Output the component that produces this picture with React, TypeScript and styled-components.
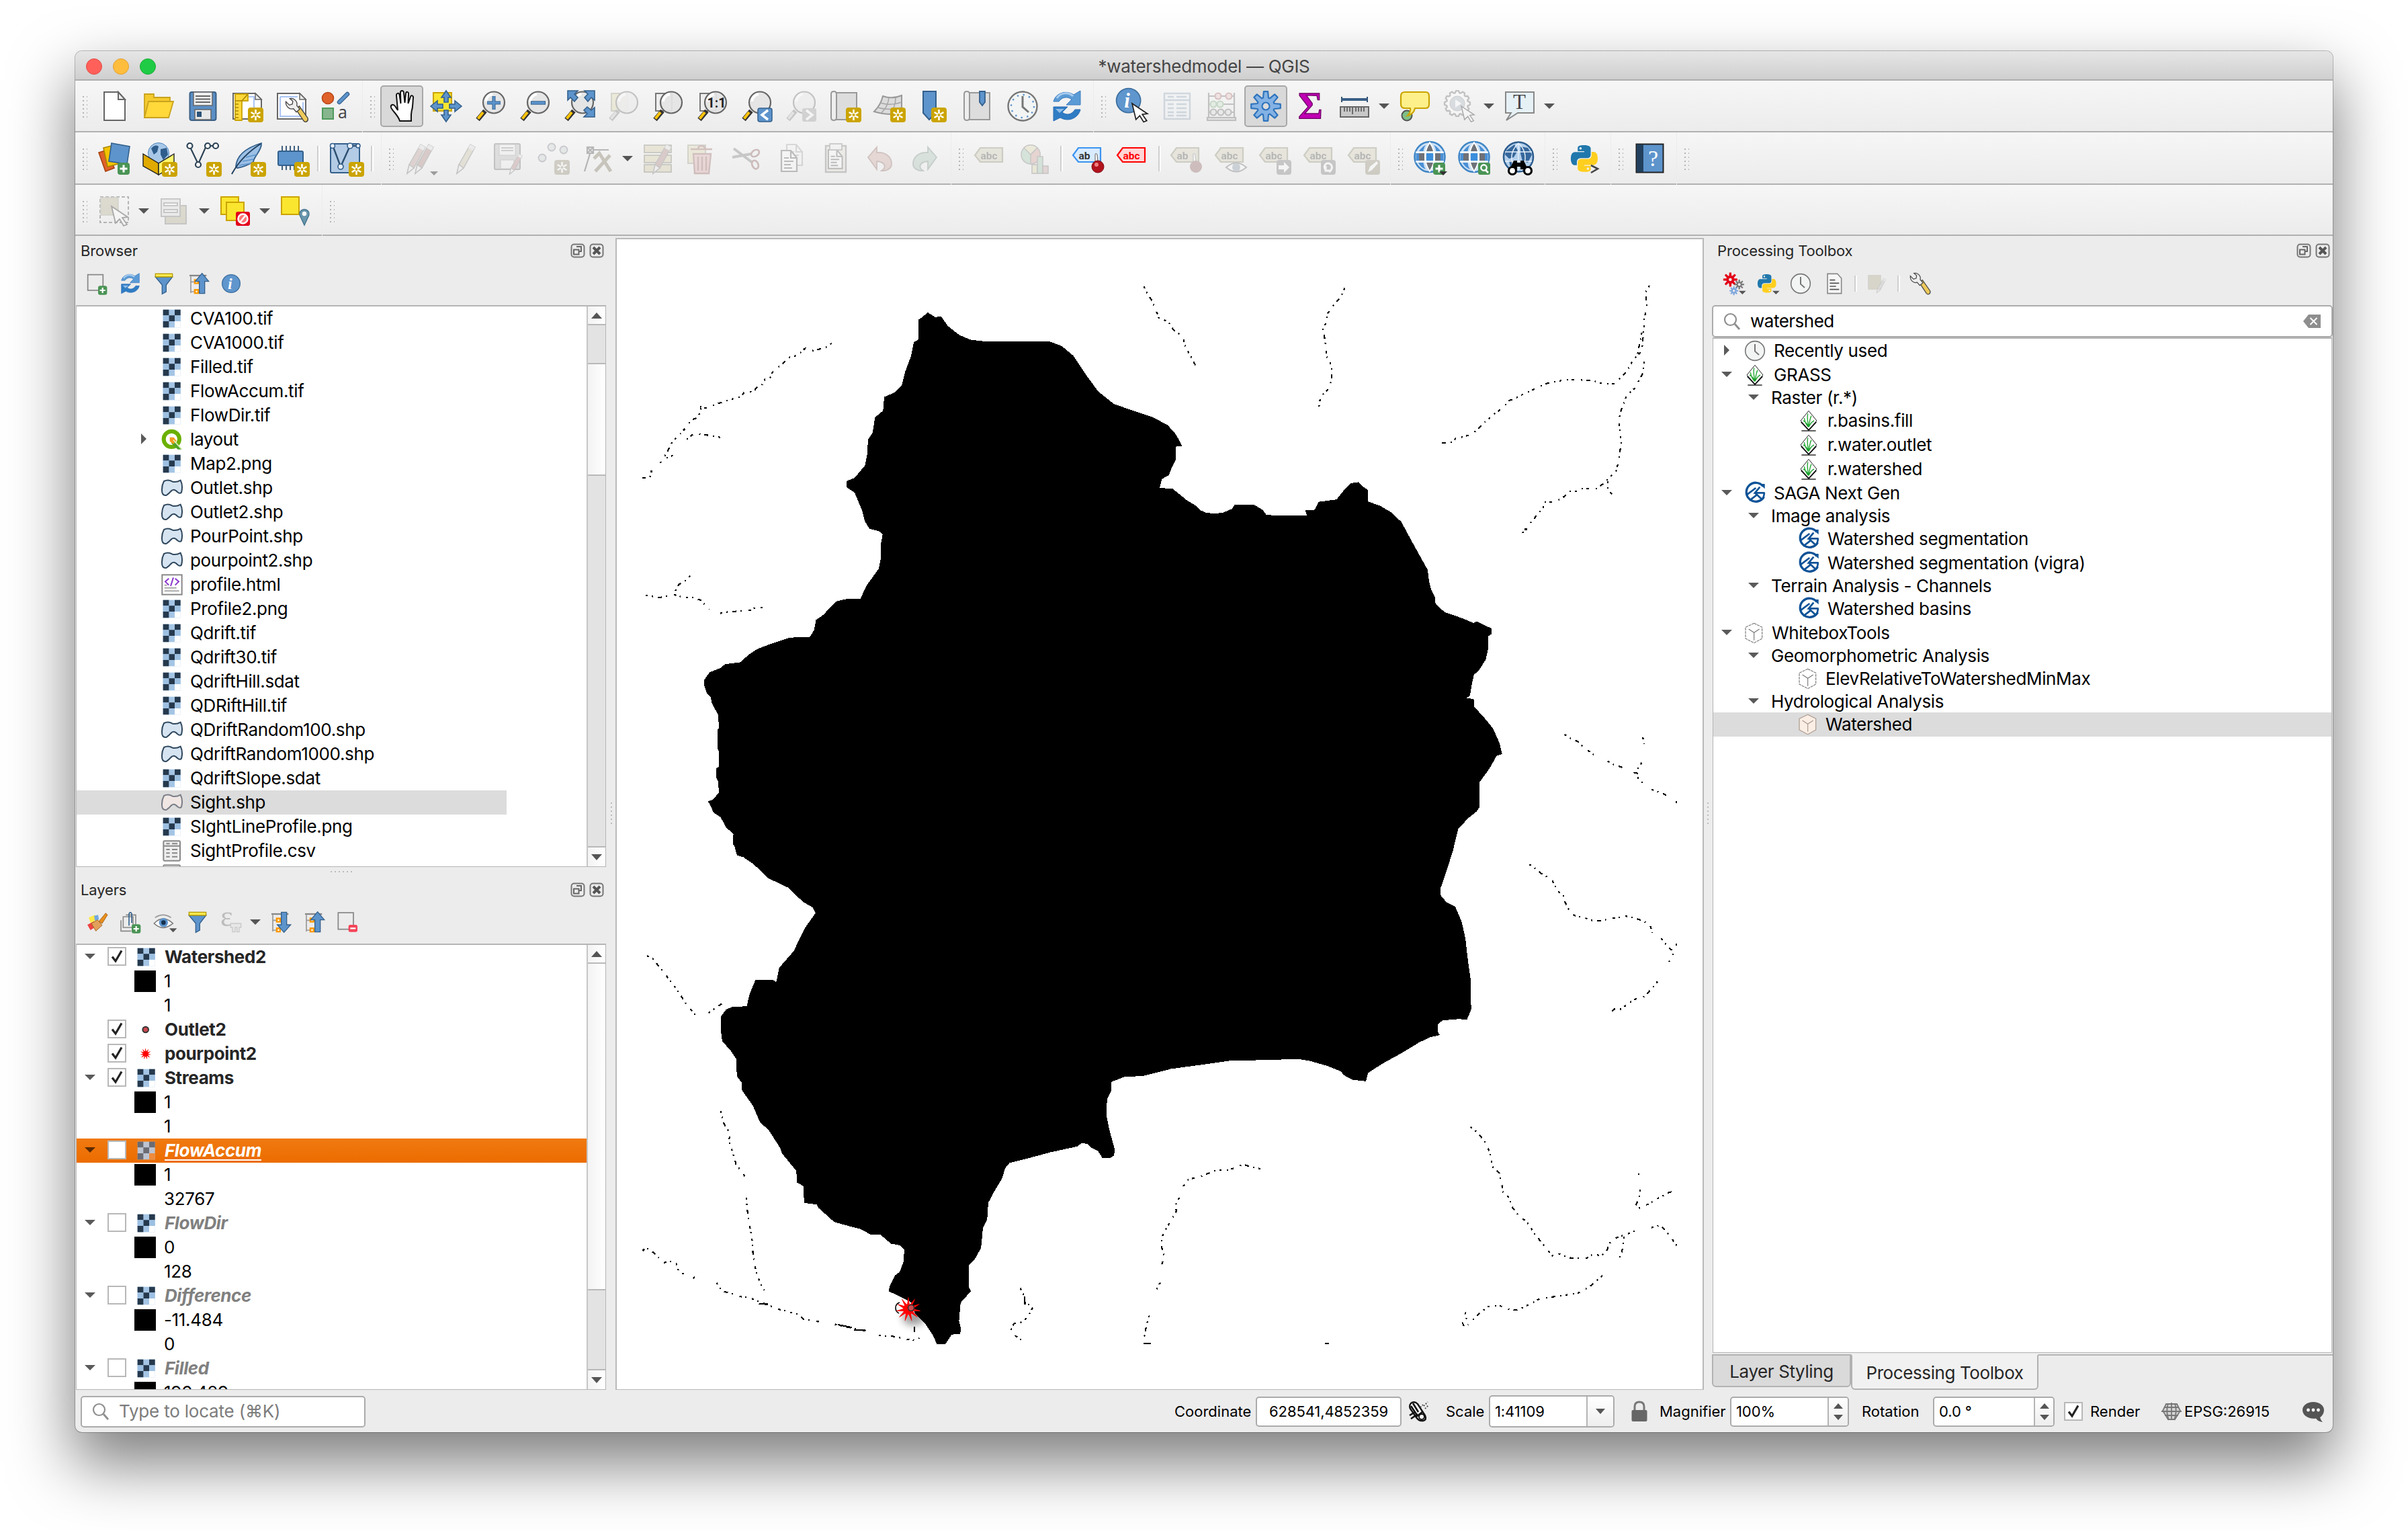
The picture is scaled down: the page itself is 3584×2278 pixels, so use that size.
import React from "react";
import styled, { createGlobalStyle, css } from "styled-components";

const GlobalStyle = createGlobalStyle`
  * { box-sizing: border-box; }
  body {
    margin: 0;
    background: #fff;
    font-family: Inter, "Liberation Sans", sans-serif;
    color: #000;
  }
`;

/* ------------------------------------------------------------------ */
/* Icons                                                               */
/* ------------------------------------------------------------------ */

const Glyph = styled.svg<{ $size: number; $faded?: boolean }>`
  display: block;
  flex: none;
  width: ${(p) => p.$size}px;
  height: ${(p) => p.$size}px;
  overflow: visible;
  opacity: ${(p) => (p.$faded ? 0.34 : 1)};
`;

const sansText = { fontFamily: "'Open Sans', 'Liberation Sans', sans-serif" };
const condText = { fontFamily: "Roboto, 'Liberation Sans', sans-serif", fontWeight: 700 };
const serifText = { fontFamily: "'Liberation Serif', serif" };

const Star = ({ x = 25, y = 26, fill = "#cba400" }) => (
  <g transform={`translate(${x} ${y})`}>
    <rect width="23" height="22" rx="4" fill={fill} stroke="none" />
    <path d="M11.5 3v16M4.6 7l13.8 8M4.6 15l13.8-8" stroke="#fff" strokeWidth="2.6" />
    <circle cx="11.5" cy="11" r="2" fill={fill} stroke="none" />
  </g>
);
const Plus = ({ x = 30, y = 30, s = 18 }) => (
  <g transform={`translate(${x} ${y}) scale(${s / 18})`}>
    <rect width="18" height="18" rx="4" fill="#4a9455" stroke="none" />
    <path d="M9 3.5v11M3.500 9h11" stroke="#fff" strokeWidth="3" />
  </g>
);
const Lens = ({ faded = false }) => (
  <g>
    <path d="M16 31L5 44" stroke={faded ? "#777" : "#333"} strokeWidth="7" />
    <path d="M13 33L5.500 42.500" stroke={faded ? "#ccc" : "#ffc40a"} strokeWidth="4" />
    <circle cx="29" cy="18.500" r="16" fill="#e4e4e4" fillOpacity=".93" stroke="#666" strokeWidth="2.200" />
    <path d="M17 17a12 12 0 0 1 10-11" fill="none" stroke="#fff" strokeWidth="4" />
  </g>
);
const Pencil = ({ c = "#a88", x = 0 }) => (
  <g transform={`translate(${x} 0)`}>
    <path d="M12 46L15 33L32 3L39 7L22 38Z" fill={c} stroke="#777" strokeWidth="1.500" />
    <path d="M12 46L15 33L22 38Z" fill="#eee" stroke="#777" strokeWidth="1.500" />
    <path d="M29 8L36 12L39 7L32 3Z" fill="#ddd" />
  </g>
);
const Cursor = ({ x = 0, y = 0, s = 1 }) => (
  <path
    transform={`translate(${x} ${y}) scale(${s})`}
    d="M0 0L24 16L16 17L23 27L18 29L12 19L6 25Z"
    fill="#fff"
    stroke="#222"
    strokeWidth="1.800"
  />
);
const Wrench = ({ handle = "#edc95a" }) => (
  <g>
    <path d="M22 22L29 16L46 40C48 46 42 50 38 46Z" fill={handle} stroke="#444" strokeWidth="1.800" />
    <path
      d="M10 1C19 -1 26 7 24 15L30 22L23 28L17 21C10 24 1 17 2 7L9 14L15 12L16 6Z"
      fill="#eee"
      stroke="#444"
      strokeWidth="1.800"
    />
  </g>
);
const Python = () => (
  <g>
    <path
      fill="#2178ac"
      d="M14.25.18l.9.2.73.26.59.3.45.32.34.34.25.34.16.33.1.3.04.26.02.2-.01.13V8.5l-.05.63-.13.55-.21.46-.26.38-.3.31-.33.25-.35.19-.35.14-.33.1-.3.07-.26.04-.21.02H8.77l-.69.05-.59.14-.5.22-.41.27-.33.32-.27.35-.2.36-.15.37-.1.35-.07.32-.04.27-.02.21v3.06H3.17l-.21-.03-.28-.07-.32-.12-.35-.18-.36-.26-.36-.36-.35-.46-.32-.59-.28-.73-.21-.88-.14-1.05-.05-1.23.06-1.22.16-1.04.24-.87.32-.71.36-.57.4-.44.42-.33.42-.24.4-.16.36-.1.32-.05.24-.01h.16l.06.01h8.16v-.83H6.18l-.01-2.75-.02-.37.05-.34.11-.31.17-.28.25-.26.31-.23.38-.2.44-.18.51-.15.58-.12.64-.1.71-.06.77-.04.84-.02 1.27.05zm-6.3 1.98l-.23.33-.08.41.08.41.23.34.33.22.41.09.41-.09.33-.22.23-.34.08-.41-.08-.41-.23-.33-.33-.22-.41-.09-.41.09z"
    />
    <path
      fill="#ffcf1f"
      d="M21.04 6.11l.28.06.32.12.35.18.36.27.36.35.35.47.32.59.28.73.21.88.14 1.04.05 1.23-.06 1.23-.16 1.04-.24.86-.32.71-.36.57-.4.45-.42.33-.42.24-.4.16-.36.09-.32.05-.24.02-.16-.01h-8.22v.82h5.84l.01 2.76.02.36-.05.34-.11.31-.17.29-.25.25-.31.24-.38.2-.44.17-.51.15-.58.13-.64.09-.71.07-.77.04-.84.01-1.27-.04-1.07-.14-.9-.2-.73-.25-.59-.3-.45-.33-.34-.34-.25-.34-.16-.33-.1-.3-.04-.25-.02-.2.01-.13v-5.34l.05-.64.13-.54.21-.46.26-.38.3-.32.33-.24.35-.2.35-.14.33-.1.3-.06.26-.04.21-.02.13-.01h5.84l.69-.05.59-.14.5-.21.41-.28.33-.32.27-.35.2-.36.15-.36.1-.35.07-.32.04-.28.02-.21V6.07h2.09l.14.01zm-6.47 14.25l-.23.33-.08.41.08.41.23.33.33.23.41.08.41-.08.33-.23.23-.33.08-.41-.08-.41-.23-.33-.33-.23-.41-.08-.41.08z"
    />
  </g>
);
const Refresh = () => (
  <g>
    <path d="M4 17C7 5 22 -1 34 7L44 1V22H23L31 14C25 9 17 10 12 17Z" fill="#5b9bd5" stroke="#3a7abf" strokeWidth="1" />
    <path d="M9 12C14 4 26 2 33 9" fill="none" stroke="#a9cdf0" strokeWidth="3" />
    <path d="M44 29C41 42 26 48 14 41L4 46V25H25L17 33C23 38 31 37 36 29Z" fill="#2f7cc4" stroke="#2a6db5" strokeWidth="1" />
    <path d="M7 28H20L13 34Z" fill="#8fbde8" />
  </g>
);
const Tag = ({ text, stroke = "#88866c", fill = "#cfcbb0", color = "#444" }: { text: string; stroke?: string; fill?: string; color?: string }) => (
  <g>
    <path d="M1 19L9 8H42V29H9Z" fill={fill} stroke={stroke} strokeWidth="2.200" />
    <text x="9.500" y="24.500" fontSize="15.500" fill={color} {...condText}>
      {text}
    </text>
  </g>
);
const Globe = () => (
  <g>
    <circle cx="24" cy="21.500" r="22.500" fill="#cfe2f5" stroke="#3f86c6" strokeWidth="2.600" />
    <path d="M10 10Q13 6 18 3.500Q15 8 14.500 13H8ZM30 3.500Q35 6 38 10L40 13H33.500Q33 8 30 3.500Z" fill="#4a90d6" />
    <path d="M18.500 13Q20 5 24 1.500Q28 5 29.500 13Z" fill="#6f7178" />
    <path d="M3.500 16H8V27H3.500ZM40 16H44.500V27H40Z" fill="#4a90d6" />
    <path d="M8 16H16V27H8ZM32 16H40V27H32Z" fill="#6f7178" />
    <path d="M19 16H29V27H19Z" fill="#3c8fdd" />
    <path d="M7 30H14.500Q15 36 18 40Q10 37 7 30ZM41 30H33.500Q33 36 30 40Q38 37 41 30Z" fill="#4a90d6" />
    <path d="M18.500 30H29.500Q28 38 24 42Q20 38 18.500 30Z" fill="#6f7178" />
    <path d="M3 14.500H45M3 28.500H45" stroke="#fff" strokeWidth="1.800" />
    <path d="M24 0Q10 21 24 43Q38 21 24 0Z" fill="none" stroke="#fff" strokeWidth="1.800" />
  </g>
);
const gearPath = (teeth: number, ro: number, ri: number, cx: number, cy: number, tip = 0.36) => {
  const pts: string[] = [];
  for (let i = 0; i < teeth; i++) {
    const a = (i / teeth) * Math.PI * 2 - Math.PI / 2;
    const w = Math.PI / teeth;
    [
      [-0.8, ri],
      [-tip, ro],
      [tip, ro],
      [0.8, ri],
    ].forEach(([k, r]) => pts.push(`${(cx + Math.cos(a + k * w) * r).toFixed(1)} ${(cy + Math.sin(a + k * w) * r).toFixed(1)}`));
  }
  return `M${pts.join("L")}Z`;
};
const TreeArrow = ({ up }: { up: boolean }) => (
  <g>
    <path d="M6 6H44" stroke="#888" strokeWidth="3.500" />
    <path d="M9 8V45M9 20H20M9 42H20" stroke="#999" strokeWidth="2.500" />
    <rect x="16" y="14" width="11" height="11" fill="#f90" />
    <rect x="16" y="36" width="11" height="11" fill="#f90" />
    <rect x="20" y="18" width="3.500" height="3.500" fill="#fff" />
    <rect x="20" y="40" width="3.500" height="3.500" fill="#fff" />
    <path
      d={up ? "M34 1L49 19H40V46H28V19H19Z" : "M34 47L49 30H40V2H28V30H19Z"}
      fill="#5d94cc"
      stroke="#33608c"
      strokeWidth="2"
    />
  </g>
);
const Info = () => (
  <g>
    <circle cx="24" cy="24" r="20" fill="#5f96cd" stroke="#3d6f9f" strokeWidth="2" />
    <text x="17" y="36" fontSize="34" fontStyle="italic" fontWeight="700" fill="#fff" {...serifText}>
      i
    </text>
  </g>
);
const Funnel = () => (
  <g>
    <path d="M5 9L20 27V47L29 42V27L43 9Z" fill="#5d94cc" stroke="#33608c" strokeWidth="2" />
    <rect x="5" y="2" width="38" height="7" fill="#fce94f" stroke="#b89b00" strokeWidth="2" />
  </g>
);
const Clock = () => (
  <g>
    <circle cx="24" cy="24" r="21.500" fill="#f3f5f5" stroke="#777" strokeWidth="2.400" />
    <path d="M24 9V25L33 33" fill="none" stroke="#777" strokeWidth="3" />
  </g>
);
const Page = ({ x = 0, y = 0 }) => (
  <g transform={`translate(${x} ${y})`}>
    <path d="M1 1H15L24 12V32H1Z" fill="#f8f8f8" stroke="#555" strokeWidth="2.200" />
    <path d="M15 1V12H24M5 12H12M5 17H19M5 22H15M5 27H17" fill="none" stroke="#555" strokeWidth="2.200" />
  </g>
);
const Roll = () => (
  <g>
    <path d="M8 4H41V44H8Z" fill="#ddd" stroke="#999" strokeWidth="2" />
    <path d="M3 6Q3 2 7 2Q11 2 11 6V41Q11 45 7 45Q3 45 3 41Z" fill="#eee" stroke="#999" strokeWidth="2" />
  </g>
);

const icons: Record<string, React.ReactNode> = {
  newFile: (
    <g fill="#fff" stroke="#666" strokeWidth="2">
      <path d="M9 3H30L40 14V45H9Z" />
      <path d="M30 3V14H40Z" fill="#eee" />
    </g>
  ),
  open: (
    <g fill="#ffd83a" stroke="#c9a21d" strokeWidth="1.800">
      <path d="M3 40V6H17V11H41V20L38 41Z" fill="#f5ca2e" />
      <path d="M9 17H46L39 41H3Z" />
    </g>
  ),
  save: (
    <g>
      <rect x="4.500" y="3" width="39" height="42" rx="3" fill="#5b8fc6" stroke="#3a5f87" strokeWidth="2" />
      <rect x="10" y="3" width="28" height="20" fill="#eee" stroke="#666" strokeWidth="1.500" />
      <path d="M13 9H35M13 13.500H35M13 18H35" stroke="#666" strokeWidth="2" />
      <rect x="12" y="29" width="24" height="15" fill="#e8e8e8" stroke="#666" strokeWidth="1.500" />
      <rect x="15" y="32" width="7" height="8" fill="#2c5378" />
    </g>
  ),
  layout: (
    <g>
      <path d="M3 5H36L45 14V43H3Z" fill="#fff" stroke="#666" strokeWidth="2" />
      <path d="M36 5V14H45Z" fill="#eee" stroke="#666" strokeWidth="1.500" />
      <path d="M15 10H34V39" fill="none" stroke="#a9c4f5" strokeWidth="2" />
      <path d="M6 6H25V16H16V45H6Z" fill="#ffd83a" stroke="#cba400" strokeWidth="1.800" />
      <path d="M25 6L16 16L6 16M6 21H11M6 26H11M6 31H11M6 36H11M6 41H11" fill="none" stroke="#a88600" strokeWidth="1.600" />
      <Star />
    </g>
  ),
  layoutManager: (
    <g>
      <path d="M3 5H36L45 14V43H3Z" fill="#fff" stroke="#666" strokeWidth="2" />
      <path d="M36 5V14H45Z" fill="#eee" stroke="#666" strokeWidth="1.500" />
      <path d="M7 10H33M7 10V39H41V18" fill="none" stroke="#a9c4f5" strokeWidth="2" />
      <g transform="translate(14 12) scale(.74)">
        <Wrench />
      </g>
    </g>
  ),
  styles: (
    <g>
      <circle cx="12" cy="12" r="8.500" fill="#e0622b" stroke="#b9481a" strokeWidth="1.600" />
      <path d="M29 18L41 6" stroke="#33608c" strokeWidth="6.500" strokeLinecap="round" />
      <path d="M29 18L41 6" stroke="#5d94cc" strokeWidth="4" strokeLinecap="round" />
      <rect x="4" y="27" width="16" height="16" fill="#87b58d" stroke="#4f9a5b" strokeWidth="2" />
      <text x="27" y="42" fontSize="25" fill="#444" {...sansText}>
        a
      </text>
    </g>
  ),
  pan: (
    <path
      d="M21 46C19 38 10 31 8 26C7 22 11 20 14 24L18 30L16 8C16 4 20 4 20.500 7L22.500 20L22 4C22 0 26.500 0 27 4L28.500 19L30 5C30.500 2 34.500 2 34 6L33.500 20L37 10C38 7 41.500 8 41 12C40 20 41 24 38.500 32C37.500 38 38 42 38 46Z"
      fill="#fff"
      stroke="#111"
      strokeWidth="2"
    />
  ),
  panSelection: (
    <g>
      <rect x="5" y="4" width="27" height="27" fill="#fbe62f" stroke="#cba400" strokeWidth="2" />
      <g fill="#5d94cc" stroke="#33608c" strokeWidth="1.600">
        <path d="M24 1L31 11H27V18H21V11H17Z" />
        <path d="M24 47L31 37H27V30H21V37H17Z" />
        <path d="M1 24L11 16V21H19V27H11V32Z" />
        <path d="M47 24L37 16V21H29V27H37V32Z" />
      </g>
    </g>
  ),
  zoomIn: (
    <g>
      <Lens />
      <path d="M29 9V29M19 19H39" stroke="#33608c" strokeWidth="5" />
      <path d="M29 9.500V28.500M19.500 19H38.500" stroke="#5d94cc" strokeWidth="3" />
    </g>
  ),
  zoomOut: (
    <g>
      <Lens />
      <path d="M18 19H40" stroke="#33608c" strokeWidth="5.500" />
      <path d="M19 19H39" stroke="#5d94cc" strokeWidth="3.500" />
    </g>
  ),
  zoomFull: (
    <g>
      <Lens />
      <g fill="#5d94cc" stroke="#33608c" strokeWidth="1.600">
        <path d="M7 1H22L17 6L22 11L17 17L11 11L7 15Z" />
        <path d="M47 1H32L37 6L32 11L37 17L42 11L47 15Z" />
        <path d="M47 40H31L36 35L31 30L36 25L42 30L47 26Z" />
      </g>
    </g>
  ),
  zoomSelection: (
    <g>
      <rect x="6" y="5" width="24" height="26" fill="#ddd6a8" stroke="#998" strokeWidth="2" />
      <Lens faded />
    </g>
  ),
  zoomLayer: (
    <g>
      <rect x="6" y="5" width="24" height="26" fill="#eee" stroke="#777" strokeWidth="2" />
      <Lens />
    </g>
  ),
  zoomNative: (
    <g>
      <rect x="6" y="5" width="24" height="26" fill="#eee" stroke="#777" strokeWidth="2" />
      <Lens />
      <text x="16.500" y="25.500" fontSize="19.500" fill="#222" {...condText}>
        1:1
      </text>
    </g>
  ),
  zoomLast: (
    <g>
      <Lens />
      <rect x="26" y="27" width="21" height="20" rx="3" fill="#5d94cc" stroke="#33608c" strokeWidth="1.500" />
      <path d="M41 30L32 37L41 44" fill="none" stroke="#fff" strokeWidth="3.500" />
    </g>
  ),
  zoomNext: (
    <g>
      <Lens faded />
      <rect x="26" y="27" width="21" height="20" rx="3" fill="#999" />
      <path d="M32 30L41 37L32 44" fill="none" stroke="#fff" strokeWidth="3.500" />
    </g>
  ),
  newMap: (
    <g>
      <Roll />
      <Star />
    </g>
  ),
  new3d: (
    <g>
      <path d="M14 9Q28 14 42 8V35Q20 38 1 32Q11 22 14 9Z" fill="#dcdcdc" stroke="#999" strokeWidth="2" />
      <path d="M10 19Q26 24 42 18M6 26Q24 31 42 26M23 11Q22 24 12 34M33 11Q33 24 25 36" fill="none" stroke="#a5a5a5" strokeWidth="1.500" />
      <Star />
    </g>
  ),
  newBookmark: (
    <g>
      <path d="M8 2H27V34L17 44L8 34Z" fill="#5d94cc" stroke="#33608c" strokeWidth="2" />
      <Star x={20} />
    </g>
  ),
  bookmarks: (
    <g>
      <Roll />
      <path d="M26 2H34V18L30 23L26 18Z" fill="#5d94cc" stroke="#33608c" strokeWidth="1.800" />
    </g>
  ),
  temporal: (
    <g>
      <Clock />
      <circle cx="24" cy="24" r="17" fill="none" stroke="#5d94cc" strokeWidth="2.400" strokeDasharray="2.400 6.500" />
    </g>
  ),
  refresh: <Refresh />,
  identify: (
    <g transform="translate(-6 -6)">
      <g transform="translate(2 0) scale(.9)">
        <Info />
      </g>
      <Cursor x={29} y={26} s={0.95} />
    </g>
  ),
  table: (
    <g fill="none" stroke="#8fa3b5" strokeWidth="2.400">
      <rect x="5" y="5" width="38" height="38" fill="#eef2f6" />
      <path d="M5 15H43M10 10H19M23 10H38M10 21H19M23 21H38M10 27H19M23 27H38M10 33H19M23 33H38M10 38H19M23 38H38" />
    </g>
  ),
  abacus: (
    <g fill="#ddd" stroke="#666" strokeWidth="2.200">
      <path d="M5 4V42M43 4V42M5 9H43M5 21H43M5 33H43" />
      <rect x="3" y="41" width="42" height="4" />
      <g fill="#e8c4c4" stroke="#a66">
        <circle cx="19" cy="9" r="4.500" />
        <circle cx="35" cy="9" r="4.500" />
      </g>
      <g fill="#cfe3cf" stroke="#7a7">
        <circle cx="12" cy="21" r="4.500" />
        <circle cx="22" cy="21" r="4.500" />
      </g>
      <circle cx="12" cy="33" r="4.500" />
      <circle cx="23" cy="33" r="4.500" />
      <circle cx="34" cy="33" r="4.500" />
    </g>
  ),
  gear: (
    <g stroke="#2f74bd" strokeWidth="2.200" strokeLinejoin="round">
      <path d={gearPath(8, 22, 13, 24, 24)} fill="#84b2e4" />
      <circle cx="24" cy="24" r="5.500" fill="#dcdcdc" />
    </g>
  ),
  sigma: (
    <text x="6" y="43" fontSize="56" fontWeight="700" fill="#c000b4" stroke="#6d0066" strokeWidth="1.300" {...serifText}>
      Σ
    </text>
  ),
  ruler: (
    <g>
      <path d="M5 10V18M43 10V18" stroke="#33526f" strokeWidth="2" />
      <path d="M5 14H43" stroke="#3a5f87" strokeWidth="4" />
      <rect x="3" y="25" width="42" height="15" fill="#c8c8c8" stroke="#666" strokeWidth="2" />
      <path d="M9 26V32M13 26V32M17 26V32M21 26V36M26 26V32M30 26V32M34 26V32M38 26V32" stroke="#555" strokeWidth="1.600" />
    </g>
  ),
  mapTip: (
    <g>
      <circle cx="12" cy="38" r="7.500" fill="#7fbf88" stroke="#555" strokeWidth="2" />
      <path d="M9 3H40Q45 3 45 9V21Q45 27 40 27H24Q22 36 13 38Q18 33 17 27H9Q3 27 3 21V9Q3 3 9 3Z" fill="#fdf08a" stroke="#cba400" strokeWidth="2.200" />
    </g>
  ),
  action: (
    <g>
      <path d={gearPath(12, 19, 16, 21, 20)} fill="#fff" stroke="#666" strokeWidth="2.400" />
      <circle cx="21" cy="20" r="11" fill="#a9b3bd" stroke="#888" />
      <path d="M18 14L27 20L18 26Z" fill="#fff" />
      <Cursor x={27} y={24} s={0.8} />
    </g>
  ),
  annotation: (
    <g>
      <path d="M3 3H45V34H21L4 45L11 34H3Z" fill="#e6f1f6" stroke="#888" strokeWidth="2" />
      <text x="14" y="28" fontSize="31" fill="#444" {...serifText}>
        T
      </text>
    </g>
  ),

  dataSource: (
    <g strokeWidth="1.600">
      <path d="M1 15L14 11L24 38L11 43Z" fill="#e0622b" stroke="#a8410f" />
      <path d="M8 8L24 4L30 32L14 36Z" fill="#f5c400" stroke="#a88600" />
      <path d="M20 1L47 6L43 32L16 28Z" fill="#5d94cc" stroke="#33608c" />
      <Plus x={29} y={30} />
    </g>
  ),
  geopackage: (
    <g>
      <circle cx="24" cy="16" r="15.500" fill="#a8c8e8" stroke="#4d86bd" />
      <path d="M13 9Q19 2 24 6L22 14L17 18ZM27 10L36 8L38 18L31 26L27 18Z" fill="#2e5d8c" />
      <path d="M1 17L24 31V48L1 35Z" fill="#e0aa00" stroke="#222" strokeWidth="1.400" />
      <path d="M47 17L24 31V48L47 35Z" fill="#fff76a" stroke="#222" strokeWidth="1.400" />
      <Star x={29} y={29} />
    </g>
  ),
  newVector: (
    <g>
      <path d="M5 7L17 32L29 5L42 5" fill="none" stroke="#2d4356" strokeWidth="2.200" />
      <g fill="#fff" stroke="#2d4356" strokeWidth="2.200">
        <circle cx="4.500" cy="5" r="4" />
        <circle cx="17" cy="33" r="4" />
        <circle cx="31" cy="5" r="4" />
        <circle cx="43" cy="5" r="4" />
      </g>
      <Star x={29} y={29} />
    </g>
  ),
  feather: (
    <g>
      <path d="M7 36C8 20 22 8 45 1C46 12 34 20 33 29C26 33 17 37 9 38Z" fill="#9cc0e6" stroke="#33608c" strokeWidth="1.800" />
      <path d="M1 47C8 34 22 16 44 2" fill="none" stroke="#22405e" strokeWidth="2" />
      <path d="M12 34L30 31M17 28L33 25M22 22L38 18" stroke="#5d94cc" strokeWidth="1.500" />
      <Star x={29} y={29} />
    </g>
  ),
  memory: (
    <g>
      <path d="M10 5V41M16 5V41M22 5V41M28 5V41M34 5V16" stroke="#2d4f70" strokeWidth="1.800" />
      <rect x="4" y="13" width="37" height="21" rx="2" fill="#5d94cc" stroke="#33608c" strokeWidth="2" />
      <Star x={28} y={29} />
    </g>
  ),
  mesh: (
    <g>
      <rect x="2" y="2" width="43" height="43" rx="2" fill="#b3cbe5" stroke="#33608c" strokeWidth="2" />
      <path d="M5 4L17 36L31 5H45" fill="none" stroke="#2d4f70" strokeWidth="2.400" />
      <g fill="#e8eff7" stroke="#33608c" strokeWidth="1.600">
        <circle cx="5" cy="5" r="3.500" />
        <circle cx="17" cy="36" r="4" />
        <circle cx="31" cy="5" r="4" />
        <circle cx="43" cy="5" r="3" />
      </g>
      <Star x={29} y={29} />
    </g>
  ),
  edits: (
    <g>
      <Pencil c="#b89a90" x={-8} />
      <Pencil c="#a67f78" x={4} />
      <path d="M38 43H50L44 49Z" fill="#000" />
    </g>
  ),
  pencil: <Pencil c="#c6c1a2" />,
  saveEdits: (
    <g>
      <rect x="2" y="2" width="38" height="38" rx="2" fill="#b5b5b5" stroke="#666" strokeWidth="2" />
      <rect x="9" y="3" width="24" height="16" fill="#eee" stroke="#888" />
      <path d="M12 8H30M12 12H30" stroke="#888" strokeWidth="2" />
      <rect x="11" y="26" width="20" height="13" fill="#eee" stroke="#888" />
      <g transform="translate(16 15) scale(.7)">
        <Pencil c="#b58080" />
      </g>
    </g>
  ),
  addPoints: (
    <g>
      <g fill="#c8d4cc" stroke="#778" strokeWidth="1.800">
        <circle cx="21" cy="7" r="5.500" />
        <circle cx="39" cy="11" r="5.500" />
        <circle cx="7" cy="23" r="5.500" />
      </g>
      <Star x={25} y={26} fill="#8f8a70" />
    </g>
  ),
  vertex: (
    <g fill="none" stroke="#444" strokeWidth="2.200">
      <rect x="8" y="7" width="9" height="9" />
      <path d="M8 7L17 16M17 7L8 16M17 11H40M12 17L4 43" />
      <path d="M20 43L42 19M18 24L26 16L31 24L43 43" stroke="#777156" strokeWidth="5" />
    </g>
  ),
  multiEdit: (
    <g>
      <g fill="#d3c9a0" stroke="#776" strokeWidth="1.800">
        <rect x="3" y="4" width="40" height="11" />
        <rect x="3" y="19" width="40" height="11" />
        <rect x="3" y="33" width="40" height="11" />
      </g>
      <Pencil c="#a67f78" x={4} />
    </g>
  ),
  trash: (
    <g>
      <rect x="2" y="4" width="26" height="27" fill="#ddd6a8" stroke="#998" strokeWidth="2" />
      <path d="M10 17H36L33 46H12Z" fill="#d8a8a4" stroke="#96605e" strokeWidth="2.400" />
      <path d="M6 10H38M17 21V42M23 21V42M29 21V42M17 10Q17 5 22 5Q27 5 27 10" fill="none" stroke="#96605e" strokeWidth="2.600" />
    </g>
  ),
  cut: (
    <g fill="none" stroke="#855" strokeWidth="2.600">
      <path d="M4 9L32 30M2 22L30 17" stroke="#777" strokeWidth="4" />
      <ellipse cx="36" cy="16" rx="6.500" ry="4.500" transform="rotate(-35 36 16)" />
      <ellipse cx="36" cy="33" rx="4.500" ry="6.500" transform="rotate(-25 36 33)" />
    </g>
  ),
  copy: (
    <g>
      <g opacity=".5">
        <Page x={16} y={2} />
      </g>
      <Page x={8} y={11} />
    </g>
  ),
  paste: (
    <g>
      <rect x="9" y="5" width="30" height="39" fill="#e0ddd0" stroke="#777" strokeWidth="2.400" />
      <g transform="translate(12 10) scale(.9)">
        <Page />
      </g>
      <rect x="15" y="2" width="18" height="9" fill="#eee" stroke="#777" strokeWidth="1.800" />
    </g>
  ),
  undo: <path d="M19 7V15C32 14 41 21 41 32C41 39 33 43 26 42C33 38 33 29 19 28V40L6 22Z" fill="#c9a39b" stroke="#8f6b65" strokeWidth="1.800" />,
  redo: <path d="M29 7V15C16 14 7 21 7 32C7 39 15 43 22 42C15 38 15 29 29 28V40L42 22Z" fill="#a9c0b6" stroke="#74897f" strokeWidth="1.800" />,
  tag: <Tag text="abc" />,
  diagram: (
    <g stroke="#777" strokeWidth="1.500">
      <circle cx="18" cy="18" r="14" fill="#9fc7ad" />
      <path d="M18 18L8 8A14 14 0 0 1 28 8Z" fill="#ddd6a8" />
      <path d="M18 18L28 8A14 14 0 0 1 18 32Z" fill="#d09c94" />
      <rect x="20" y="33" width="8" height="13" fill="#ddd6a8" />
      <rect x="28" y="21" width="8" height="25" fill="#9fc7ad" />
      <rect x="36" y="35" width="8" height="11" fill="#c9a5a5" />
    </g>
  ),
  tagPinned: (
    <g>
      <Tag text="ab" stroke="#3b94f0" fill="#d9ebff" color="#333" />
      <path d="M34 18Q35 15 37 18L38 28H34Z" fill="#fff" stroke="#777" strokeWidth="1.200" />
      <circle cx="38" cy="36" r="9" fill="#b2141e" stroke="#7e0c14" />
      <circle cx="36" cy="33" r="3" fill="#f08080" />
    </g>
  ),
  tagRed: <Tag text="abc" stroke="#f00" fill="#ffd5d5" color="#f00" />,
  tagPin: (
    <g>
      <Tag text="ab" />
      <path d="M34 18Q35 15 37 18L38 28H34Z" fill="#fff" stroke="#777" strokeWidth="1.200" />
      <circle cx="38" cy="36" r="9" fill="#8d5c5c" />
    </g>
  ),
  tagEye: (
    <g>
      <Tag text="abc" />
      <path d="M17 37Q32 24 47 37Q32 50 17 37Z" fill="#fff" stroke="#666" strokeWidth="2" />
      <circle cx="32" cy="37" r="6" fill="#8796a6" />
    </g>
  ),
  tagMove: (
    <g>
      <Tag text="abc" />
      <rect x="26" y="26" width="22" height="22" rx="4" fill="#777" />
      <path d="M29 34H37V29L45 37L37 45V40H29Z" fill="#fff" />
    </g>
  ),
  tagRotate: (
    <g>
      <Tag text="abc" />
      <rect x="26" y="26" width="22" height="22" rx="4" fill="#777" />
      <path d="M33 41C28 33 36 28 41 33C44 37 42 41 38 44M33 35V42H40" fill="none" stroke="#fff" strokeWidth="3" />
    </g>
  ),
  tagEdit: (
    <g>
      <Tag text="abc" />
      <rect x="26" y="26" width="22" height="22" rx="4" fill="#8f8a70" />
      <path d="M30 44L33 36L43 28L45 31L36 41Z" fill="#fff" />
    </g>
  ),
  globeAdd: (
    <g>
      <Globe />
      <Plus x={29} y={30} />
      <path d="M38 43H50L44 49Z" fill="#333" />
    </g>
  ),
  globeSearch: (
    <g>
      <Globe />
      <rect x="30" y="30" width="18" height="18" rx="3" fill="#4a9455" />
      <circle cx="38.500" cy="37.500" r="4.200" fill="none" stroke="#fff" strokeWidth="2.400" />
      <path d="M41 41L45 45" stroke="#fff" strokeWidth="2.600" />
    </g>
  ),
  globeFind: (
    <g>
      <circle cx="24" cy="21.500" r="22" fill="#b5d0ec" stroke="#2d5d8e" strokeWidth="2.600" />
      <path d="M6 12L18 3L23 12L17 22L10 24L4 18ZM27 6L38 8L44 18L38 30L30 28L27 16ZM10 27L19 29L20 40L12 37Z" fill="#36679c" />
      <path d="M4 14H44M4 28H44M24 1V42M24 1Q6 18 20 42M24 1Q42 18 28 42" fill="none" stroke="#e8f1fa" strokeWidth="1.400" />
      <path d="M17 27H22V30H27V27H32L38 40H27V36H22V40H11Z" fill="#000" />
      <g fill="#fff" stroke="#000" strokeWidth="3.200">
        <circle cx="15" cy="42" r="5.500" />
        <circle cx="38" cy="42" r="5.500" />
      </g>
    </g>
  ),
  python: (
    <g>
      <g transform="translate(4 4) scale(1.660)">
        <Python />
      </g>
      <path d="M34 34L44 39L34 45" fill="none" stroke="#444" strokeWidth="2.600" />
    </g>
  ),
  help: (
    <g>
      <rect x="3.500" y="2.500" width="40" height="42" fill="#5d94cc" stroke="#222" strokeWidth="2" />
      <rect x="4" y="3" width="10" height="41" fill="#22405e" />
      <text x="21" y="35" fontSize="34" fill="#fff" {...serifText}>
        ?
      </text>
    </g>
  ),

  select: (
    <g>
      <rect x="3" y="3" width="42" height="38" fill="none" stroke="#444" strokeWidth="2" strokeDasharray="5 3" />
      <rect x="4" y="4" width="26" height="26" fill="#b3ad8c" stroke="#998" strokeWidth="1.500" />
      <Cursor x={20} y={17} />
    </g>
  ),
  selectValue: (
    <g stroke="#777" strokeWidth="2">
      <rect x="10" y="16" width="31" height="27" fill="#b3ad8c" />
      <rect x="4" y="6" width="28" height="26" fill="#ddd" />
      <path d="M8 12H28V16H8ZM8 22H28V26H8Z" fill="#fff" />
    </g>
  ),
  deselect: (
    <g>
      <rect x="3" y="3" width="26" height="26" fill="#fbe62f" stroke="#cba400" strokeWidth="2" />
      <rect x="11" y="11" width="26" height="27" fill="#fbe62f" stroke="#cba400" strokeWidth="2" />
      <rect x="25" y="25" width="21" height="21" rx="3" fill="#e3001b" />
      <circle cx="35.500" cy="35.500" r="7" fill="#f77" stroke="#fff" strokeWidth="2.600" />
      <path d="M31 41L40 30" stroke="#fff" strokeWidth="2.600" />
    </g>
  ),
  selectLocation: (
    <g>
      <rect x="3" y="3" width="26" height="26" fill="#fbe62f" stroke="#cba400" strokeWidth="2" />
      <path d="M37 45L31 32A7 7 0 1 1 43 32Z" fill="#6a97ad" stroke="#44758f" strokeWidth="1.500" />
      <circle cx="37" cy="28" r="3.200" fill="#fff" />
    </g>
  ),

  addLayer: (
    <g>
      <rect x="4" y="4" width="34" height="35" fill="none" stroke="#888" strokeWidth="2.600" />
      <Plus x={27} y={29} s={20} />
    </g>
  ),
  filter: <Funnel />,
  collapse: <TreeArrow up />,
  expand: <TreeArrow up={false} />,
  info: <Info />,
  brush: (
    <g>
      <path d="M6 14L20 8L24 20L10 26Z" fill="#ffe94a" />
      <path d="M3 30L18 22L22 34L10 42Z" fill="#ef4444" />
      <path d="M18 10L27 8L29 18L20 21Z" fill="#74a9e0" />
      <path d="M12 27L26 19L36 31L22 44Z" fill="#e2a15a" stroke="#a8651f" strokeWidth="1.500" />
      <path d="M29 22L44 4L48 8L36 27Z" fill="#e88f1c" stroke="#a8651f" strokeWidth="1.500" />
    </g>
  ),
  addGroup: (
    <g>
      <g fill="none" stroke="#888" strokeWidth="2.400">
        <path d="M14 8H36V30M8 14V36M8 12H30V36H8ZM3 20V44H26" />
        <path d="M21 32V5Q24 0 27 5V26" stroke="#33608c" />
      </g>
      <Plus x={27} y={29} s={20} />
    </g>
  ),
  eye: (
    <g>
      <path d="M2 27Q22 6 44 27Q22 46 2 27Z" fill="#fff" stroke="#777" strokeWidth="2.400" />
      <path d="M4 14Q22 2 40 14" fill="none" stroke="#999" strokeWidth="2.400" />
      <circle cx="23" cy="25" r="10" fill="#5d94cc" />
      <circle cx="23" cy="25" r="5" fill="#16324f" />
      <path d="M36 38H53L44.500 47Z" fill="#555" />
    </g>
  ),
  epsilon: (
    <g>
      <text x="0" y="33" fontSize="66" fill="#666" {...serifText}>
        ε
      </text>
      <path d="M23 27H46V36H42V46H37V36H33V46H27V36H23Z" fill="#ddd" stroke="#888" strokeWidth="2" />
    </g>
  ),
  removeLayer: (
    <g>
      <rect x="5" y="3" width="34" height="37" fill="none" stroke="#888" strokeWidth="2.600" />
      <rect x="28" y="30" width="20" height="16" rx="4" fill="#f4455a" />
      <path d="M32 38H44" stroke="#fff" strokeWidth="3.500" />
    </g>
  ),
  models: (
    <g>
      <path d={gearPath(8, 16, 9, 17, 15)} fill="#e30016" />
      <circle cx="17" cy="15" r="3.500" fill="#ececec" />
      <path d={gearPath(8, 11, 6, 37, 26)} fill="#777" />
      <circle cx="37" cy="26" r="3" fill="#ececec" />
      <path d={gearPath(8, 10, 6, 25, 40)} fill="#7fa7dc" />
      <circle cx="25" cy="40" r="2.500" fill="#ececec" />
      <path d="M36 40H52L44 48Z" fill="#555" />
    </g>
  ),
  scripts: (
    <g>
      <g transform="translate(3 3) scale(1.720)">
        <Python />
      </g>
      <path d="M36 40H52L44 48Z" fill="#555" />
    </g>
  ),
  history: <Clock />,
  results: (
    <g fill="#f6f6f6" stroke="#888" strokeWidth="2.400">
      <path d="M9 2H31L40 12V46H9Z" />
      <path d="M14 16H26M14 23H35M14 30H28M14 37H35" stroke="#555" />
    </g>
  ),
  editInPlace: (
    <g>
      <rect x="4" y="5" width="28" height="32" fill="#b0a888" stroke="#998" />
      <g transform="translate(14 10) scale(.75)">
        <Pencil c="#bbb" />
      </g>
    </g>
  ),
  options: <Wrench />,

  raster: (
    <g>
      <path d="M4 4H43V44H4Z" fill="#a5c5e5" />
      <path d="M4 4H17V17H4ZM30 4H43V17H30ZM17 17H30V30H17ZM4 30H17V44H4Z" fill="#26394d" />
      <path d="M30 30H43V44H30Z" fill="#fff" />
      <path d="M4 17H17V30H4ZM30 17H43V30H30Z" fill="#9dc0e2" />
    </g>
  ),
  rasterSel: (
    <g>
      <path d="M4 4H43V44H4Z" fill="#bcc4d2" />
      <path d="M4 4H17V17H4ZM30 4H43V17H30ZM17 17H30V30H17ZM4 30H17V44H4Z" fill="#6b6b72" />
      <path d="M30 30H43V44H30Z" fill="#ee8b3c" />
    </g>
  ),
  polygon: (
    <path
      d="M6 9Q16 4 25 10Q34 12 43 7Q49 18 45 34Q42 38 36 33Q29 25 23 30Q17 37 12 40Q4 42 2 34Q0 20 6 9Z"
      fill="#d6e4f2"
      stroke="#2f475d"
      strokeWidth="3"
    />
  ),
  polygonSel: (
    <path
      d="M6 9Q16 4 25 10Q34 12 43 7Q49 18 45 34Q42 38 36 33Q29 25 23 30Q17 37 12 40Q4 42 2 34Q0 20 6 9Z"
      fill="#f0e6e3"
      stroke="#7a7e88"
      strokeWidth="3"
    />
  ),
  qgis: (
    <g>
      <circle cx="23" cy="23" r="17.500" fill="none" stroke="#6bb000" strokeWidth="9" />
      <path d="M23 22L46 46H37L23 33Z" fill="#4fa028" />
      <path d="M19 19H28L34 27L27 34L19 28Z" fill="#f39a1e" />
      <path d="M27 25L46 46" stroke="#d6efb5" strokeWidth="2.500" />
    </g>
  ),
  html: (
    <g>
      <rect x="2" y="2" width="44" height="44" fill="#fff" stroke="#888" strokeWidth="3" />
      <path d="M17 10L9 17L17 25M31 10L39 17L31 25M27 8L21 27" fill="none" stroke="#8a35d0" strokeWidth="3" />
      <path d="M7 25H13M7 31H34M7 38H40" stroke="#aaa" strokeWidth="3" />
    </g>
  ),
  csv: (
    <g fill="none" stroke="#888" strokeWidth="3">
      <rect x="5" y="2" width="37" height="44" rx="2" fill="#eee" />
      <path d="M5 13H42M11 8H19M24 8H36M11 21H19M24 21H36M11 29H19M24 29H36M11 37H19M24 37H36" />
    </g>
  ),
  grass: (
    <g>
      <path d="M24 2L42 24L24 44L6 24Z" fill="#fff" stroke="#222" strokeWidth="1.500" />
      <path d="M7 27L24 45L41 27" fill="none" stroke="#111" strokeWidth="2.600" />
      <path d="M24 38Q20 20 22 8M24 38Q27 18 30 13M24 38Q18 26 12 24M24 38Q30 26 36 24M23 38Q16 30 14 18" fill="none" stroke="#1ca32c" strokeWidth="2" />
      <path d="M8 46.500H40" stroke="#111" strokeWidth="2" />
    </g>
  ),
  saga: (
    <g fill="none" stroke="#0e5397" strokeWidth="5">
      <path d="M42 8A21 21 0 1 0 44 32" />
      <path d="M46 23H24L35 10M24 23L40 38M5 28L26 12M12 40L30 26" strokeWidth="4" />
      <path d="M34 3H46V14Z" fill="#0e5397" stroke="none" />
      <path d="M45 23L43 34L36 40" strokeWidth="4" />
    </g>
  ),
  cube: (
    <g fill="#fff" stroke="#777" strokeWidth="1.700">
      <path d="M22 2L40 11V36L22 46L3 36V11Z" strokeDasharray="6 1.500" />
      <path d="M10 15L22 23L34 15M22 23V40" fill="none" />
    </g>
  ),
  cubeSel: (
    <g fill="#fbeee4" stroke="#a8958a" strokeWidth="1.700">
      <path d="M22 2L40 11V36L22 46L3 36V11Z" />
      <path d="M10 15L22 23L34 15M22 23V40" fill="none" />
    </g>
  ),
  dotRed: <circle cx="22" cy="24" r="6.500" fill="#c94a50" stroke="#333" strokeWidth="3" />,
  burst: <path d={gearPath(11, 12, 6, 22, 24, 0.1)} fill="#f00" />,
};

const Icon = ({ name, size = 48, faded }: { name: string; size?: number; faded?: boolean }) => (
  <Glyph $size={size} $faded={faded} viewBox="0 0 48 48">
    {icons[name]}
  </Glyph>
);

/* ------------------------------------------------------------------ */
/* Window chrome                                                       */
/* ------------------------------------------------------------------ */

const Desktop = styled.div`
  width: 3584px;
  height: 2278px;
  padding: 76px 112px 0;
  background: #fff;
  overflow: hidden;
`;

const Window = styled.div`
  display: flex;
  flex-direction: column;
  width: 3360px;
  height: 2055px;
  border-radius: 10px;
  overflow: hidden;
  background: #ececec;
  box-shadow: 0 0 0 1px rgba(0, 0, 0, 0.24), 0 44px 92px 4px rgba(0, 0, 0, 0.5);
`;

const TitleBar = styled.header`
  display: grid;
  grid-template-columns: 1fr auto 1fr;
  align-items: center;
  flex: none;
  height: 44px;
  padding: 3px 16px 0;
  background: linear-gradient(#e6e6e6, #cfcfcf);
  border-bottom: 2px solid #aeaeae;
  color: #454545;
  font-size: 26px;
  letter-spacing: -0.3px;
`;

const Lights = styled.div`
  display: flex;
  gap: 16px;
`;

const Light = styled.span<{ $fill: string; $edge: string }>`
  width: 24px;
  height: 24px;
  border-radius: 50%;
  background: ${(p) => p.$fill};
  border: 1px solid ${(p) => p.$edge};
`;

const ToolbarRow = styled.div<{ $h: number }>`
  display: flex;
  flex: none;
  height: ${(p) => p.$h}px;
`;

const Toolbar = styled.div<{ $fill?: boolean; $drop: number }>`
  display: flex;
  align-items: center;
  padding: ${(p) => p.$drop}px 6px 0 3px;
  margin-right: 1px;
  background: linear-gradient(#f6f6f6, #ececec);
  border-bottom: 2px solid #b1b1b1;
  ${(p) => p.$fill && css`flex: 1; margin-right: 0;`}
`;

const Grip = styled.span`
  width: 9px;
  height: 35px;
  margin: 0 7px 0 6px;
  background-image: radial-gradient(circle, #b4b4b4 1.3px, transparent 1.5px);
  background-size: 6px 6px;
`;

const ToolButton = styled.button<{ $active?: boolean }>`
  display: flex;
  align-items: center;
  justify-content: center;
  width: 64px;
  height: 62px;
  margin: 0 1px;
  padding: 0;
  border-radius: 5px;
  border: 2px solid ${(p) => (p.$active ? "#a8a8a8" : "transparent")};
  background: ${(p) => (p.$active ? "#d9d9d9" : "none")};
`;

const Caret = styled.span<{ $w?: number }>`
  display: flex;
  justify-content: center;
  width: ${(p) => p.$w ?? 24}px;
  padding-right: ${(p) => (p.$w ? 0 : 2)}px;
  &::before {
    content: "";
    border: 8px solid transparent;
    border-top-color: #555;
    border-bottom: 0;
  }
`;

const Divider = styled.span<{ $h?: number; $m?: number }>`
  width: 4px;
  height: ${(p) => p.$h ?? 38}px;
  margin: 0 ${(p) => p.$m ?? 5}px;
  border-left: 2px solid #cfcfcf;
  border-right: 2px solid #fff;
`;

type Tool = { icon?: string; off?: boolean; on?: boolean; menu?: boolean; sep?: boolean };
const on = (icon: string): Tool => ({ icon });
const off = (icon: string): Tool => ({ icon, off: true });
const menu = (icon: string, isOff = false): Tool => ({ icon, off: isOff, menu: true });
const sep: Tool = { sep: true };

const toolbarRows: { height: number; drop: number; bars: Tool[][] }[] = [
  {
    height: 77,
    drop: 1,
    bars: [
      ["newFile", "open", "save", "layout", "layoutManager", "styles"].map(on),
      [
        { icon: "pan", on: true },
        ...["panSelection", "zoomIn", "zoomOut", "zoomFull"].map(on),
        off("zoomSelection"),
        ...["zoomLayer", "zoomNative", "zoomLast"].map(on),
        off("zoomNext"),
        ...["newMap", "new3d", "newBookmark", "bookmarks", "temporal", "refresh"].map(on),
      ],
      [
        on("identify"),
        off("table"),
        off("abacus"),
        { icon: "gear", on: true },
        on("sigma"),
        menu("ruler"),
        on("mapTip"),
        menu("action", true),
        menu("annotation"),
      ],
    ],
  },
  {
    height: 78,
    drop: 2,
    bars: [
      [...["dataSource", "geopackage", "newVector", "feather", "memory"].map(on), sep, on("mesh"), sep],
      [
        ...["edits", "pencil", "saveEdits", "addPoints"].map(off),
        menu("vertex", true),
        ...["multiEdit", "trash", "cut", "copy", "paste", "undo", "redo"].map(off),
      ],
      [
        off("tag"),
        off("diagram"),
        sep,
        on("tagPinned"),
        on("tagRed"),
        sep,
        ...["tagPin", "tagEye", "tagMove", "tagRotate", "tagEdit"].map(off),
      ],
      ["globeAdd", "globeSearch", "globeFind"].map(on),
      [on("python")],
      [on("help")],
      [],
    ],
  },
  {
    height: 76,
    drop: 4,
    bars: [[menu("select", true), menu("selectValue", true), menu("deselect"), on("selectLocation")], []],
  },
];

const ToolbarTools = ({ tools }: { tools: Tool[] }) => (
  <>
    {tools.map((t, i) =>
      t.sep ? (
        <Divider key={i} />
      ) : (
        <React.Fragment key={i}>
          <ToolButton $active={t.on}>
            <Icon name={t.icon!} faded={t.off} />
          </ToolButton>
          {t.menu && <Caret />}
        </React.Fragment>
      )
    )}
  </>
);

/* ------------------------------------------------------------------ */
/* Docks                                                               */
/* ------------------------------------------------------------------ */

const Workspace = styled.main`
  display: flex;
  flex: none;
  height: 1717px;
`;

const LeftDocks = styled.aside`
  display: flex;
  flex-direction: column;
  width: 791px;
`;

const RightDock = styled.aside`
  display: flex;
  flex-direction: column;
  width: 924px;
`;

const DockTitle = styled.div<{ $h: number }>`
  display: flex;
  align-items: center;
  flex: none;
  gap: 6px;
  height: ${(p) => p.$h}px;
  padding: 0 4px 0 8px;
  color: #262626;
  font-size: 22px;
  letter-spacing: -0.15px;
`;

const Push = styled.span`
  flex: 1;
`;

const DockButton = ({ close }: { close?: boolean }) => (
  <Glyph $size={22} viewBox="0 0 22 22">
    <rect x="1.500" y="1.500" width="19" height="19" rx="4" fill="none" stroke="#777" strokeWidth="2" />
    {close ? (
      <path d="M6 6L16 16M16 6L6 16" stroke="#555" strokeWidth="4" />
    ) : (
      <path d="M9 5H16V12H13M5 9.500H12.500V16.500H5Z" fill="none" stroke="#666" strokeWidth="2" />
    )}
  </Glyph>
);

const DockTools = styled.div<{ $h: number; $gap?: number }>`
  display: flex;
  align-items: center;
  flex: none;
  gap: ${(p) => p.$gap ?? 18}px;
  height: ${(p) => p.$h}px;
  padding: 0 0 5px 16px;
`;

const ListFrame = styled.div<{ $h: number }>`
  display: flex;
  flex: none;
  height: ${(p) => p.$h}px;
  margin: 0 1px;
  border: 1px solid #b5b5b5;
  border-top-width: 2px;
  background: #fff;
  overflow: hidden;
`;

const ListBody = styled.div`
  flex: 1;
  overflow: hidden;
`;

const ScrollTrack = styled.div`
  display: flex;
  flex-direction: column;
  flex: none;
  width: 28px;
  border-left: 2px solid #c6c6c6;
  background: #e3e3e3;
`;

const ScrollPiece = styled.div<{ $h?: number; $kind: "button" | "thumb" | "slot" }>`
  display: flex;
  align-items: center;
  justify-content: center;
  ${(p) => (p.$h ? css`flex: none; height: ${p.$h}px;` : css`flex: 1;`)}
  background: ${(p) => (p.$kind === "slot" ? "#e3e3e3" : "linear-gradient(90deg, #f3f3f3, #fff)")};
  border-bottom: 2px solid #b9b9b9;
  &:last-child { border-bottom: 0; }
`;

const Arrow = styled.i<{ $up?: boolean; $s?: number }>`
  border: ${(p) => p.$s ?? 8}px solid transparent;
  ${(p) =>
    p.$up
      ? css`border-bottom: ${(p.$s ?? 8) + 1}px solid #555; border-top: 0;`
      : css`border-top: ${(p.$s ?? 8) + 1}px solid #555; border-bottom: 0;`}
`;

const Row = styled.div<{ $pad: number; $h?: number }>`
  display: flex;
  align-items: center;
  height: ${(p) => p.$h ?? 36}px;
  padding: 0 0 2px ${(p) => p.$pad}px;
  font-size: 26px;
  letter-spacing: -0.35px;
  white-space: nowrap;
  & > svg { margin-top: 2px; }
`;

const Twisty = styled.span<{ $state?: "open" | "closed"; $dark?: boolean }>`
  display: flex;
  justify-content: center;
  flex: none;
  width: 24px;
  &::before {
    content: "";
    ${(p) => p.$state === "open" && css`border: 8px solid transparent; border-bottom: 0; border-top: 8px solid ${p.$dark ? "#5b2a00" : "#5a5a5a"};`}
    ${(p) => p.$state === "closed" && css`border: 8px solid transparent; border-right: 0; border-left: 8px solid #5a5a5a;`}
  }
`;

const BrowserRow = styled(Row)<{ $selected?: boolean }>`
  width: ${(p) => (p.$selected ? "640px" : "auto")};
  background: ${(p) => (p.$selected ? "#dcdcdc" : "none")};
  & > ${Twisty} { margin-right: 14px; }
  & > svg { margin-right: 11px; }
`;

const browserItems: [string, string][] = [
  ["raster", "CVA100.tif"],
  ["raster", "CVA1000.tif"],
  ["raster", "Filled.tif"],
  ["raster", "FlowAccum.tif"],
  ["raster", "FlowDir.tif"],
  ["qgis", "layout"],
  ["raster", "Map2.png"],
  ["polygon", "Outlet.shp"],
  ["polygon", "Outlet2.shp"],
  ["polygon", "PourPoint.shp"],
  ["polygon", "pourpoint2.shp"],
  ["html", "profile.html"],
  ["raster", "Profile2.png"],
  ["raster", "Qdrift.tif"],
  ["raster", "Qdrift30.tif"],
  ["raster", "QdriftHill.sdat"],
  ["raster", "QDRiftHill.tif"],
  ["polygon", "QDriftRandom100.shp"],
  ["polygon", "QdriftRandom1000.shp"],
  ["raster", "QdriftSlope.sdat"],
  ["polygonSel", "Sight.shp"],
  ["raster", "SIghtLineProfile.png"],
  ["csv", "SightProfile.csv"],
  ["csv", ""],
];

const LayerRow = styled(Row)<{ $selected?: boolean; $muted?: boolean }>`
  font-weight: 700;
  letter-spacing: -0.4px;
  color: #262626;
  & > svg { margin: 2px 11px 0 14px; }
  ${(p) => p.$muted && css`font-style: italic; color: #808080;`}
  ${(p) =>
    p.$selected &&
    css`
      font-style: italic;
      color: #fff;
      background: linear-gradient(#f07a10, #ec6c00);
    `}
`;

const LayerName = styled.span<{ $underline?: boolean }>`
  ${(p) => p.$underline && css`text-decoration: underline; text-underline-offset: 4px; text-decoration-thickness: 2px; text-decoration-skip-ink: none;`}
`;

const Checkbox = styled.span`
  display: flex;
  align-items: center;
  justify-content: center;
  flex: none;
  width: 28px;
  height: 28px;
  margin-left: 14px;
  border: 2px solid #b8b8b8;
  background: #fff;
`;

const Tick = () => (
  <Glyph $size={20} viewBox="0 0 20 20">
    <path d="M3 10.500L8 17L17 1.500" fill="none" stroke="#222" strokeWidth="3.200" />
  </Glyph>
);

const LegendRow = styled(Row)`
  gap: 12px;
`;

const Swatch = styled.span<{ $on: boolean }>`
  width: 32px;
  height: 32px;
  margin-top: 2px;
  background: ${(p) => (p.$on ? "#000" : "transparent")};
`;

type Layer = { name: string; icon: string; open?: boolean; checked?: boolean; selected?: boolean; legend?: string[] };
const layers: Layer[] = [
  { name: "Watershed2", icon: "raster", open: true, checked: true, legend: ["1", "1"] },
  { name: "Outlet2", icon: "dotRed", checked: true },
  { name: "pourpoint2", icon: "burst", checked: true },
  { name: "Streams", icon: "raster", open: true, checked: true, legend: ["1", "1"] },
  { name: "FlowAccum", icon: "rasterSel", open: true, selected: true, legend: ["1", "32767"] },
  { name: "FlowDir", icon: "raster", open: true, legend: ["0", "128"] },
  { name: "Difference", icon: "raster", open: true, legend: ["-11.484", "0"] },
  { name: "Filled", icon: "raster", open: true, legend: ["196.429"] },
];

const HSplitter = styled.div`
  display: flex;
  justify-content: center;
  align-items: center;
  flex: none;
  height: 14px;
  &::before {
    content: "";
    width: 36px;
    height: 4px;
    background: radial-gradient(circle, #bbb 1.3px, transparent 1.5px) 0 0 / 6px 4px;
  }
`;

const VSplitter = styled.div<{ $w: number }>`
  display: flex;
  justify-content: center;
  align-items: center;
  flex: none;
  width: ${(p) => p.$w}px;
  &::before {
    content: "";
    width: 4px;
    height: 36px;
    background: radial-gradient(circle, #bbb 1.3px, transparent 1.5px) 0 0 / 4px 6px;
  }
`;

const SearchBox = styled.div<{ $w?: number; $h: number; $muted?: boolean }>`
  display: flex;
  align-items: center;
  flex: none;
  gap: 14px;
  width: ${(p) => (p.$w ? `${p.$w}px` : "auto")};
  height: ${(p) => p.$h}px;
  padding: 0 16px 1px 15px;
  border: 2px solid #ababab;
  border-radius: 5px;
  background: #fff;
  color: ${(p) => (p.$muted ? "#7c7c7c" : "#000")};
  font-size: 26px;
  letter-spacing: ${(p) => (p.$muted ? -0.2 : -0.5)}px;
`;

const SearchGlyph = () => (
  <Glyph $size={26} viewBox="0 0 26 26">
    <circle cx="10.500" cy="10.500" r="8.500" fill="none" stroke="#8e8e8e" strokeWidth="2.200" />
    <path d="M17 17L24 25" stroke="#8e8e8e" strokeWidth="2.800" />
  </Glyph>
);

const ClearGlyph = () => (
  <Glyph $size={26} viewBox="0 0 26 26">
    <path d="M8 3H26V23H8L0 13Z" fill="#8e8e8e" />
    <path d="M10.500 8L20.500 18M20.500 8L10.500 18" stroke="#fff" strokeWidth="2" />
  </Glyph>
);

const ToolRow = styled(Row)<{ $selected?: boolean; $tight?: boolean }>`
  background: ${(p) => (p.$selected ? "#dcdcdc" : "none")};
  & > ${Twisty} { margin-right: 14px; }
  & > svg { margin-right: ${(p) => (p.$tight ? 9 : 12)}px; }
`;

type Algo = [level: 0 | 1 | 2, label: string, icon?: string, state?: "open" | "closed"];
const algorithms: Algo[] = [
  [0, "Recently used", "history", "closed"],
  [0, "GRASS", "grass", "open"],
  [1, "Raster (r.*)"],
  [2, "r.basins.fill", "grass"],
  [2, "r.water.outlet", "grass"],
  [2, "r.watershed", "grass"],
  [0, "SAGA Next Gen", "saga", "open"],
  [1, "Image analysis"],
  [2, "Watershed segmentation", "saga"],
  [2, "Watershed segmentation (vigra)", "saga"],
  [1, "Terrain Analysis - Channels"],
  [2, "Watershed basins", "saga"],
  [0, "WhiteboxTools", "cube", "open"],
  [1, "Geomorphometric Analysis"],
  [2, "ElevRelativeToWatershedMinMax", "cube"],
  [1, "Hydrological Analysis"],
  [2, "Watershed", "cubeSel"],
];
const levelPad = [8, 48, 126];

const Tabs = styled.div`
  display: flex;
  align-items: flex-start;
  margin-top: 2px;
  &::after {
    content: "";
    flex: 1;
    border-top: 2px solid #b5b5b5;
  }
`;

const Tab = styled.div<{ $w: number; $active?: boolean }>`
  display: flex;
  align-items: center;
  justify-content: center;
  width: ${(p) => p.$w}px;
  height: ${(p) => (p.$active ? 53 : 49)}px;
  padding-top: 2px;
  border: 2px solid #b2b2b2;
  border-top-color: ${(p) => (p.$active ? "transparent" : "#b2b2b2")};
  border-radius: 0 0 6px 6px;
  background: ${(p) => (p.$active ? "#f1f1f1" : "#dadada")};
  color: #262626;
  font-size: 26px;
  letter-spacing: -0.4px;
`;

/* ------------------------------------------------------------------ */
/* Map                                                                 */
/* ------------------------------------------------------------------ */

const MapFrame = styled.section`
  flex: none;
  width: 1620px;
  margin-top: 3px;
  border: 2px solid #b9b9b9;
  border-bottom-width: 1px;
  background: #fff;
`;

const MapSvg = styled.svg`
  display: block;
  width: 1616px;
  height: 1711px;
`;

type Sheet = { x: number; y: number; sx: number; sy: number };
const NW: Sheet = { x: 920, y: 400, sx: 1.7422, sy: 1.7422 };
const NE: Sheet = { x: 1700, y: 400, sx: 1.8667, sy: 1.7422 };
const SE: Sheet = { x: 1700, y: 1250, sx: 1.8667, sy: 1.8447 };
const SW: Sheet = { x: 920, y: 1250, sx: 1.7422, sy: 1.8447 };

const project = (s: Sheet, pts: string) =>
  pts
    .trim()
    .split(/\s+/)
    .map((p) => {
      const [a, b] = p.split(",").map(Number);
      return `${(s.x + a / s.sx).toFixed(1)},${(s.y + b / s.sy).toFixed(1)}`;
    })
    .join(" ");

const basin = [
  project(
    NW,
    `308,1520 302,1497 297,1490 299,1465 280,1448 266,1422 248,1410 236,1385 232,1381 246,1376 261,1358 260,1330 255,1320
     254,1296 261,1290 261,1250 258,1245 258,1195 261,1190 260,1158 243,1125 240,1110 230,1100 223,1080 223,1066 237,1046 265,1035 277,1025
     316,1020 340,999 362,985 402,970 446,956 497,954 508,937 513,910 532,897 548,880 566,862 595,855 628,855 645,820 676,777 681,750 681,715
     686,688 676,680 652,674 640,655 633,627 613,580 592,566 593,550 613,542 640,510 646,480 648,443 660,425 666,385 687,368 690,332 716,321
     735,303 745,265 760,225 767,190 779,183 779,132 790,124 803,113 822,125 838,124 855,148 885,172 915,184 950,188 1118,188 1150,200 1180,225
     1215,277 1245,318 1285,350 1330,366 1385,384 1425,405 1447,430 1462,459 1446,461 1446,495 1436,515 1428,535 1410,545 1404,568 1438,570
     1475,600 1500,615 1510,626`
  ),
  project(
    NE,
    `180,633 205,634 225,632 250,622 257,611 312,612 335,625 345,638 395,640 458,640 453,626 478,626 490,604 540,598 562,572 580,556 600,553 612,564
     627,573 627,603 660,614 690,630 720,656 750,708 793,780 797,810 803,832 813,850 815,868 840,890 890,906 920,918 930,914 970,932 970,947
     961,953 961,985 955,1012 935,1042 922,1052 915,1080 911,1106 901,1113 921,1115 923,1136 950,1163 975,1192 993,1230 1000,1258 985,1262
     965,1295 938,1330 937,1395 930,1406 905,1425 878,1452 863,1510 843,1568`
  ),
  project(
    SE,
    `840,100 828,135 828,150 845,170 870,183 888,225 898,270 905,330 913,385 914,465 908,480 902,493 880,491 835,495 822,505 822,528
     828,535 800,541 770,555 720,585 665,615 627,640 622,662 585,658 560,645 553,635 515,620 465,606 435,601 360,603 240,606 155,618 80,628
     40,638 0,648`
  ),
  project(
    SW,
    `1315,649 1278,664 1279,688 1268,710 1266,755 1275,800 1288,850 1286,866 1275,873 1256,873 1244,853 1228,845 1218,835 1203,831 1190,841
     1120,857 1065,873 1015,886 1004,900 995,930 975,965 960,995 957,1040 946,1065 941,1120 925,1150 910,1167 909,1225 915,1238 888,1270
     884,1320 889,1342 887,1356 865,1357 849,1383 826,1383 817,1360 795,1325 770,1300 762,1270 735,1255 701,1238 705,1222 718,1195 730,1185
     740,1158 742,1125 730,1112 708,1108 680,1083 655,1083 630,1068 600,1060 560,1048 520,1010 515,1000 482,996 481,950 464,940 462,908
     425,860 420,845 390,795 368,775 350,730 320,685 320,665 308,648 306,600 290,575 270,553 266,520 266,485 280,465 295,458 334,456 340,425
     356,384 402,384 410,390 418,350 455,305 485,240 512,200 505,185 480,170 440,130 390,105 350,65 325,47`
  ),
].join(" ");

const streams: [Sheet, string[]][] = [
  [
    NW,
    [
      "554,193 540,203 522,208 508,213 485,206 466,224 445,229 412,258 397,272 394,284 381,285 374,300 362,305 350,319 330,317 316,332 287,340 257,350 230,360 215,360 213,350",
      "215,360 208,385 190,392 172,416 152,437 140,450 124,480 109,503",
      "142,483 130,490 118,490",
      "265,437 225,430 197,427 175,444",
      "86,522 86,536 78,542 62,542",
      "187,796 175,808 158,818 145,840",
      "72,846 88,849 108,852 145,845 168,851 195,852 206,856 222,862 225,874 237,881",
      "265,893 285,889 320,887 345,885 352,880 375,878",
      "1363,46 1370,60 1384,82 1392,100 1403,130 1425,135 1440,158 1452,166 1467,185 1473,207 1482,222 1497,250",
    ],
  ],
  [
    NE,
    [
      "563,50 550,75 525,102 514,118 512,138 502,155 508,185 513,230 526,250 527,285 518,312 505,322 494,340 491,360",
      "1409,43 1399,60 1402,100 1395,130 1393,165 1388,215 1378,222 1362,240 1345,268 1332,280 1312,298 1280,298 1250,289 1180,287 1120,298 1090,312 1068,320 1036,336 1018,342 1000,362 975,378 945,404 920,426 895,435 870,440 860,450 833,452",
      "1388,165 1376,222",
      "1395,240 1391,270 1370,308 1345,330 1340,345 1327,375 1325,400 1331,450 1325,490 1318,522 1295,545 1280,558 1262,569 1215,570 1205,577 1188,577 1165,596 1145,604 1115,604 1115,618 1095,640 1080,658 1068,675 1060,675 1054,697",
      "1293,550 1293,572 1306,584",
      "1174,1207 1190,1217 1210,1225 1230,1243 1262,1264",
      "1293,1276 1310,1285 1338,1294",
      "1388,1280 1376,1298 1368,1306 1386,1310",
      "1391,1214 1394,1232",
      "1376,1318 1391,1334",
      "1415,1350 1440,1357 1458,1366",
      "1484,1380 1484,1392",
    ],
  ],
  [
    SE,
    [
      "1076,67 1095,80 1112,94 1135,105 1145,120 1152,138 1170,152 1175,170 1184,188 1200,207 1225,212 1255,222 1275,222 1300,215 1318,214 1340,208 1370,214 1410,230 1418,254",
      "1442,270 1460,292 1475,305 1475,318 1464,334",
      "1484,284 1484,298",
      "1432,388 1415,408 1395,430 1368,437 1345,453 1330,464 1312,464 1296,478",
      "912,787 932,803 955,832 965,855 970,880 975,900 992,913 999,945 1003,968 1018,980 1028,1007 1045,1030 1068,1047 1090,1080 1118,1115 1140,1141 1158,1136 1185,1146 1200,1148 1235,1148 1255,1135 1275,1142 1290,1128 1300,1105 1320,1090 1350,1080 1380,1068",
      "1415,1064 1440,1056 1465,1085 1485,1113",
      "1339,1088 1333,1130 1324,1150",
      "1383,960 1380,985 1371,1003 1382,1010 1410,997 1430,985 1462,968 1481,962",
      "1279,1196 1250,1220 1220,1241 1170,1250 1105,1258 1080,1272 1042,1290 1015,1288 994,1278 965,1278 935,1300 905,1331",
      "897,1296 902,1312 890,1325 894,1334",
      "1379,914 1379,918",
      "329,902 305,898 282,890 255,900 240,906 205,906 168,921 128,932 114,950",
      "103,982 92,1003 95,1018 78,1048 58,1080 52,1110 61,1143 54,1168",
      "50,1215 36,1240",
      "20,1305 12,1330 8,1355 4,1368",
    ],
  ],
  [
    SW,
    [
      "75,318 90,326 112,355 127,375 150,407 180,455 200,479",
      "234,474 250,463 277,443",
      "266,743 275,780 291,806 287,824 298,861 306,890 330,925",
      "332,982 337,1035 347,1092 350,1140 358,1185 368,1215 379,1236",
      "64,1127 72,1118 90,1131 108,1150 120,1160 133,1156 150,1160 157,1182 170,1191",
      "195,1203 205,1193",
      "255,1215 268,1237 295,1245 316,1253 340,1256 368,1268 388,1275 410,1286 436,1293 468,1302 480,1315 520,1322",
      "562,1329 600,1338 645,1346",
      "676,1360 712,1362 740,1368 770,1374 781,1366",
      "1043,1230 1053,1252 1055,1274 1078,1277 1062,1310 1043,1325 1028,1326 1018,1340 1030,1360 1043,1370 1043,1382",
    ],
  ],
];

const ticks = [
  project(SW, "1362,1382 1382,1382"),
  project(SE, "508,1382 519,1382"),
  project(SW, "365,1273 388,1274"),
  project(SW, "1054,1252 1055,1274"),
  project(SW, "768,1336 768,1350"),
  project(SW, "570,1330 606,1338"),
  project(SW, "612,1344 642,1346"),
];

const MapCanvas = () => (
  <MapSvg viewBox="918 356 1616 1711">
    <defs>
      <filter id="soft" x="-100%" y="-100%" width="300%" height="300%">
        <feGaussianBlur stdDeviation="6" />
      </filter>
    </defs>
    <ellipse cx="1360" cy="1960" rx="17" ry="12" fill="#000" opacity=".38" filter="url(#soft)" />
    <g shapeRendering="crispEdges">
      <polygon points={basin} />
      <g fill="none" stroke="#000" strokeWidth="2.200" strokeDasharray="3 6 2 7 6 6 2 10 4 5 2 8">
        {streams.map(([sheet, lines]) => lines.map((l) => <polyline key={l} points={project(sheet, l)} />))}
      </g>
      <g fill="none" stroke="#000" strokeWidth="2.200">
        {ticks.map((t) => (
          <polyline key={t} points={t} />
        ))}
      </g>
    </g>
    <path d="M1339 1938Q1333 1940 1333 1946Q1333 1952 1338 1954" fill="none" stroke="#000" strokeWidth="1.600" />
    <path d={gearPath(11, 18, 8, 1352, 1948, 0.06)} fill="#f00" />
    <circle cx="1356" cy="1946" r="4.500" fill="#c94a50" stroke="#333" strokeWidth="1.600" />
  </MapSvg>
);

/* ------------------------------------------------------------------ */
/* Status bar                                                          */
/* ------------------------------------------------------------------ */

const StatusBar = styled.footer`
  display: flex;
  align-items: center;
  flex: 1;
  padding: 1px 12px 0 8px;
  font-size: 22px;
`;

const Label = styled.span<{ $w: number; $ml?: number }>`
  flex: none;
  width: ${(p) => p.$w}px;
  margin-left: ${(p) => p.$ml ?? 0}px;
  white-space: nowrap;
`;

const Field = styled.div<{ $w: number; $h?: number; $ml: number; $center?: boolean }>`
  display: flex;
  align-items: center;
  justify-content: ${(p) => (p.$center ? "center" : "space-between")};
  flex: none;
  width: ${(p) => p.$w}px;
  height: ${(p) => p.$h ?? 45}px;
  margin-left: ${(p) => p.$ml}px;
  padding-left: ${(p) => (p.$center ? 0 : 7)}px;
  border: 2px solid #ababab;
  border-radius: 5px;
  background: #fff;
  letter-spacing: -0.1px;
  overflow: hidden;
`;

const Stepper = styled.div<{ $w: number }>`
  display: flex;
  flex-direction: column;
  align-items: center;
  justify-content: center;
  gap: 9px;
  width: ${(p) => p.$w}px;
  height: 100%;
  border-left: 2px solid #b5b5b5;
  background: linear-gradient(#fff, #eee);
`;

const Slot = styled.span<{ $ml: number }>`
  display: flex;
  margin-left: ${(p) => p.$ml}px;
`;

const MouseGlyph = () => (
  <Glyph $size={32} viewBox="0 0 32 32">
    <path d="M4 4Q9 0 14 5L25 22Q28 29 22 30Q16 31 12 25L3 12Q1 7 4 4Z" fill="#fff" stroke="#111" strokeWidth="2.400" />
    <path d="M7 4L15 17M4 8L12 20M12 24L22 16M2 22L10 17M4 27L14 20" stroke="#111" strokeWidth="2.600" />
    <circle cx="20" cy="24" r="4" fill="#fff" stroke="#111" strokeWidth="2" />
    <path d="M18 10L22 6M23 8L29 2M25 12L30 7" stroke="#555" strokeWidth="2" strokeDasharray="2 2" />
  </Glyph>
);

const LockGlyph = () => (
  <Glyph $size={32} viewBox="0 0 32 32">
    <path d="M9 15V9Q9 2 16 2Q23 2 23 9V15" fill="none" stroke="#777" strokeWidth="3" />
    <rect x="4.500" y="14" width="23" height="17" rx="2" fill="#666" />
  </Glyph>
);

const CrsGlyph = () => (
  <Glyph $size={32} viewBox="0 0 32 32">
    <g fill="none" stroke="#777" strokeWidth="1.800">
      <path d="M8 5H24L29 15L21 28H11L3 15Z" fill="#d4d4d4" />
      <path d="M5 10H27M1 16H31M6 22H26M16 3V29M11 4Q7 16 12 29M21 4Q25 16 20 29" />
    </g>
  </Glyph>
);

const BubbleGlyph = () => (
  <Glyph $size={34} viewBox="0 0 34 34">
    <path d="M17 3C26 3 33 8 33 15C33 20 30 24 27 26Q28 30 31 33Q24 32 21 27.500C10 29 1 23 1 15C1 8 8 3 17 3Z" fill="#555" />
    <circle cx="9.500" cy="15" r="2.400" fill="#fff" />
    <circle cx="17" cy="15" r="2.400" fill="#fff" />
    <circle cx="24.500" cy="15" r="2.400" fill="#fff" />
  </Glyph>
);

const ScrollBar = ({ slotTop, thumb }: { slotTop?: number; thumb: number }) => (
  <ScrollTrack>
    <ScrollPiece $kind="button" $h={28}>
      <Arrow $up />
    </ScrollPiece>
    {slotTop && <ScrollPiece $kind="slot" $h={slotTop} />}
    <ScrollPiece $kind="thumb" $h={thumb} />
    <ScrollPiece $kind="slot" />
    <ScrollPiece $kind="button" $h={28}>
      <Arrow />
    </ScrollPiece>
  </ScrollTrack>
);

/* ------------------------------------------------------------------ */

export default function App() {
  return (
    <Desktop>
      <GlobalStyle />
      <Window>
        <TitleBar>
          <Lights>
            <Light $fill="#ff605a" $edge="#e24a44" />
            <Light $fill="#ffbd3e" $edge="#e0a033" />
            <Light $fill="#1fcb45" $edge="#1bab38" />
          </Lights>
          <span>*watershedmodel — QGIS</span>
        </TitleBar>

        {toolbarRows.map((row, r) => (
          <ToolbarRow key={r} $h={row.height}>
            {row.bars.map((tools, i) => (
              <Toolbar key={i} $fill={i === row.bars.length - 1} $drop={row.drop}>
                <Grip />
                <ToolbarTools tools={tools} />
              </Toolbar>
            ))}
          </ToolbarRow>
        ))}

        <Workspace>
          <LeftDocks>
            <DockTitle $h={44}>
              Browser
              <Push />
              <DockButton />
              <DockButton close />
            </DockTitle>
            <DockTools $h={59}>
              {["addLayer", "refresh", "filter", "collapse", "info"].map((n) => (
                <Icon key={n} name={n} size={32} />
              ))}
            </DockTools>
            <ListFrame $h={836}>
              <ListBody>
                {browserItems.map(([icon, name], i) => (
                  <BrowserRow key={i} $pad={88} $selected={name === "Sight.shp"}>
                    <Twisty $state={name === "layout" ? "closed" : undefined} />
                    <Icon name={icon} size={32} />
                    {name}
                  </BrowserRow>
                ))}
              </ListBody>
              <ScrollBar slotTop={58} thumb={166} />
            </ListFrame>
            <HSplitter />
            <DockTitle $h={40}>
              Layers
              <Push />
              <DockButton />
              <DockButton close />
            </DockTitle>
            <DockTools $h={60}>
              <Icon name="brush" size={32} />
              <Icon name="addGroup" size={32} />
              <Icon name="eye" size={32} />
              <Icon name="filter" size={32} />
              <Icon name="epsilon" size={32} faded />
              <Caret $w={4} />
              <Icon name="expand" size={32} />
              <Icon name="collapse" size={32} />
              <Icon name="removeLayer" size={32} />
            </DockTools>
            <ListFrame $h={664}>
              <ListBody>
                {layers.map((l) => (
                  <React.Fragment key={l.name}>
                    <LayerRow $pad={8} $selected={l.selected} $muted={!l.checked && !l.selected}>
                      <Twisty $state={l.open ? "open" : undefined} $dark={l.selected} />
                      <Checkbox>{l.checked && <Tick />}</Checkbox>
                      <Icon name={l.icon} size={32} />
                      <LayerName $underline={l.selected}>{l.name}</LayerName>
                    </LayerRow>
                    {l.legend?.map((value, i) => (
                      <LegendRow key={i} $pad={86}>
                        <Swatch $on={i === 0} />
                        {value}
                      </LegendRow>
                    ))}
                  </React.Fragment>
                ))}
              </ListBody>
              <ScrollBar thumb={486} />
            </ListFrame>
          </LeftDocks>

          <VSplitter $w={13} />
          <MapFrame>
            <MapCanvas />
          </MapFrame>
          <VSplitter $w={12} />

          <RightDock>
            <DockTitle $h={44}>
              Processing Toolbox
              <Push />
              <DockButton />
              <DockButton close />
            </DockTitle>
            <DockTools $h={59}>
              <Icon name="models" size={32} />
              <Icon name="scripts" size={32} />
              <Icon name="history" size={32} />
              <Icon name="results" size={32} />
              <Divider $h={24} $m={-4} />
              <Icon name="editInPlace" size={32} faded />
              <Divider $h={24} $m={-4} />
              <Icon name="options" size={32} />
            </DockTools>
            <SearchBox $h={48}>
              <SearchGlyph />
              watershed
              <Push />
              <ClearGlyph />
            </SearchBox>
            <ListFrame $h={1511}>
              <ListBody>
                {algorithms.map(([level, label, icon, state]) => (
                  <ToolRow
                    key={label}
                    $pad={levelPad[level]}
                    $h={level === 1 ? 32 : 36}
                    $selected={icon === "cubeSel"}
                    $tight={icon?.startsWith("cube")}
                  >
                    {level < 2 && <Twisty $state={level === 1 ? "open" : state} />}
                    {icon && <Icon name={icon} size={32} />}
                    {label}
                  </ToolRow>
                ))}
              </ListBody>
            </ListFrame>
            <Tabs>
              <Tab $w={207}>Layer Styling</Tab>
              <Tab $w={279} $active>
                Processing Toolbox
              </Tab>
            </Tabs>
          </RightDock>
        </Workspace>

        <StatusBar>
          <SearchBox $w={424} $h={47} $muted>
            <SearchGlyph />
            Type to locate (⌘K)
          </SearchBox>
          <Push />
          <Label $w={113}>Coordinate</Label>
          <Field $w={217} $ml={8} $center>
            628541,4852359
          </Field>
          <Slot $ml={10}>
            <MouseGlyph />
          </Slot>
          <Label $w={57} $ml={24}>
            Scale
          </Label>
          <Field $w={187} $h={48} $ml={7}>
            1:41109
            <Stepper $w={40}>
              <Arrow $s={7} />
            </Stepper>
          </Field>
          <Slot $ml={21}>
            <LockGlyph />
          </Slot>
          <Label $w={97} $ml={14}>
            Magnifier
          </Label>
          <Field $w={177} $ml={8}>
            100%
            <Stepper $w={30}>
              <Arrow $up $s={7} />
              <Arrow $s={7} />
            </Stepper>
          </Field>
          <Label $w={85} $ml={19}>
            Rotation
          </Label>
          <Field $w={181} $ml={21}>
            0.0 °
            <Stepper $w={29}>
              <Arrow $up $s={7} />
              <Arrow $s={7} />
            </Stepper>
          </Field>
          <Checkbox>
            <Tick />
          </Checkbox>
          <Label $w={72} $ml={11}>
            Render
          </Label>
          <Slot $ml={33}>
            <CrsGlyph />
          </Slot>
          <Label $w={129} $ml={3}>
            EPSG:26915
          </Label>
          <Slot $ml={46}>
            <BubbleGlyph />
          </Slot>
        </StatusBar>
      </Window>
    </Desktop>
  );
}
